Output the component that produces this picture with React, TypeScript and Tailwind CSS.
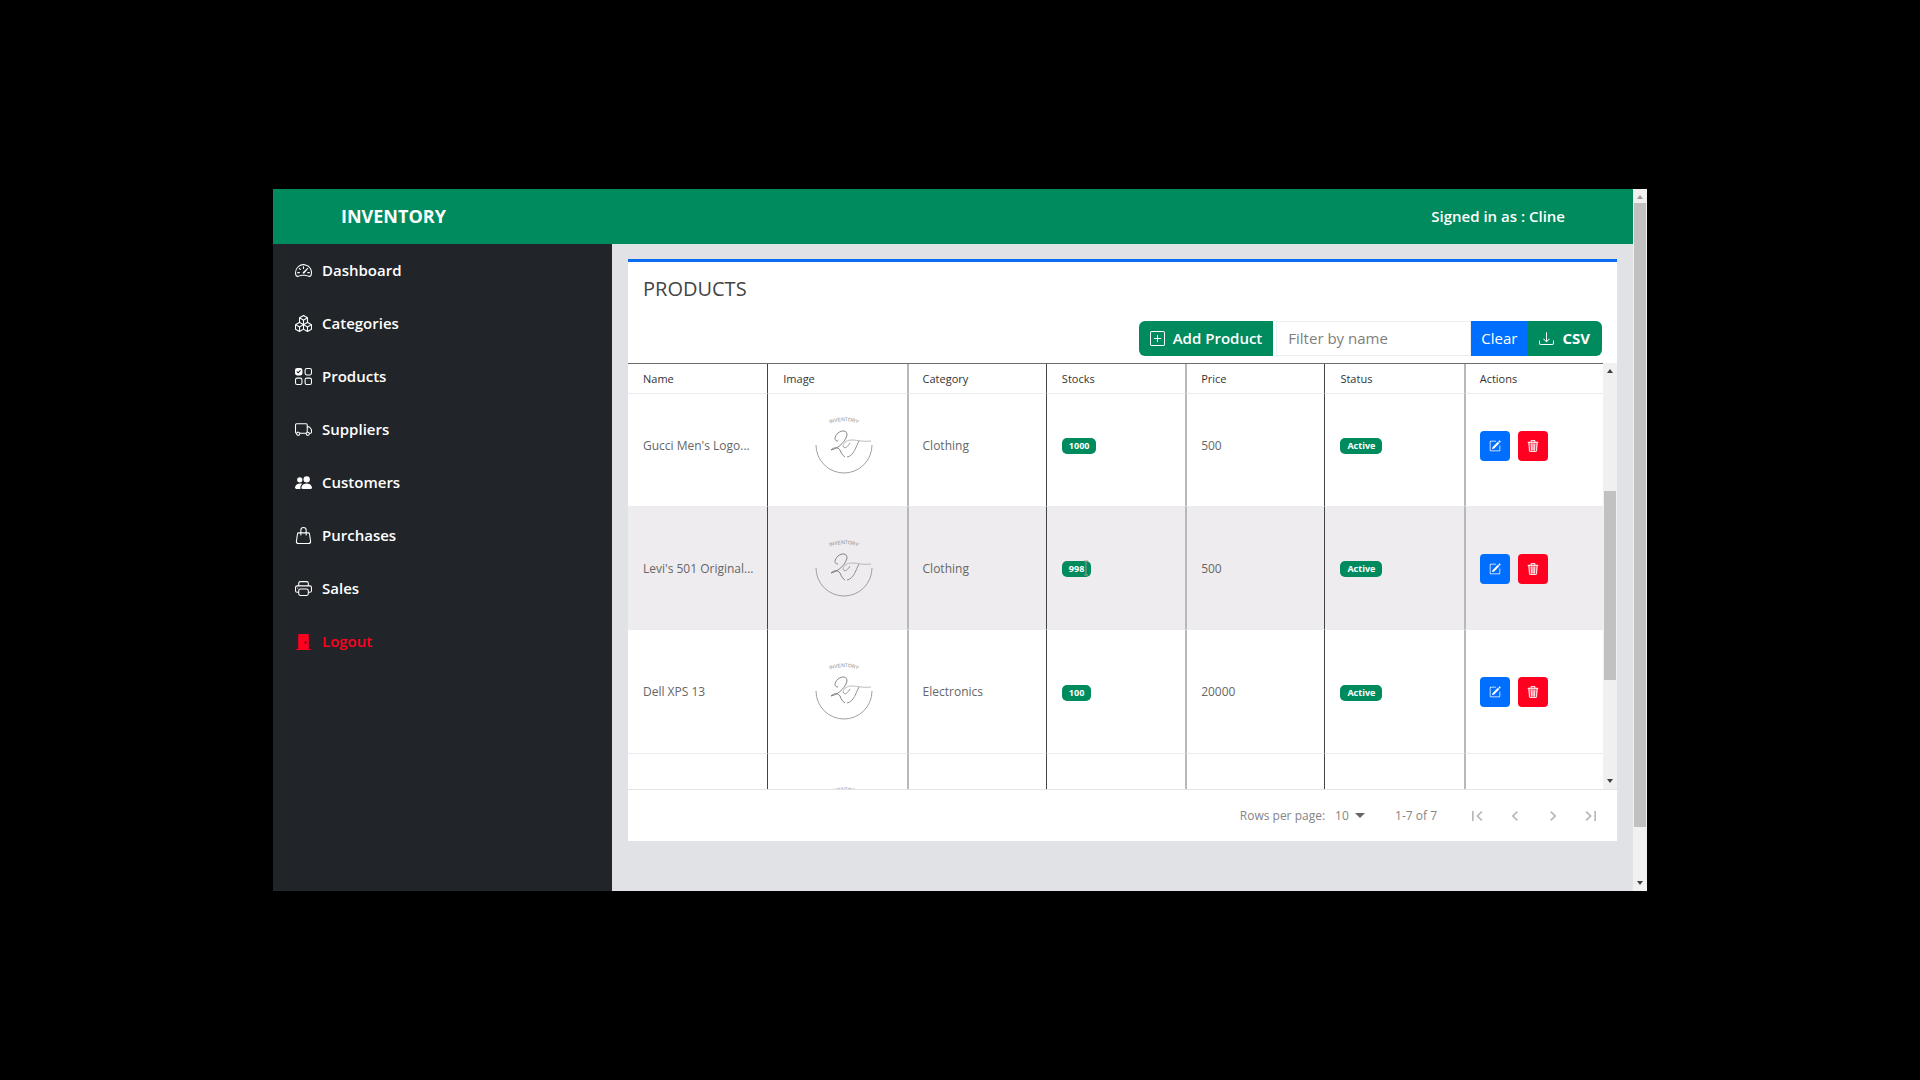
import type { ReactNode } from 'react';
import type { IconType } from 'react-icons';
import {
  BsSpeedometer2,
  BsBoxes,
  BsUiChecksGrid,
  BsTruck,
  BsPeopleFill,
  BsHandbag,
  BsPrinter,
  BsDoorClosedFill,
  BsPlusSquare,
  BsDownload,
  BsPencilSquare,
  BsTrash3,
} from 'react-icons/bs';
import { MdFirstPage, MdChevronLeft, MdChevronRight, MdLastPage } from 'react-icons/md';

type NavItem = { label: string; icon: IconType; danger?: boolean };
type Product = { name: string; category: string; stock: number; price: number };

const navItems: NavItem[] = [
  { label: 'Dashboard', icon: BsSpeedometer2 },
  { label: 'Categories', icon: BsBoxes },
  { label: 'Products', icon: BsUiChecksGrid },
  { label: 'Suppliers', icon: BsTruck },
  { label: 'Customers', icon: BsPeopleFill },
  { label: 'Purchases', icon: BsHandbag },
  { label: 'Sales', icon: BsPrinter },
  { label: 'Logout', icon: BsDoorClosedFill, danger: true },
];

const columns = ['Name', 'Image', 'Category', 'Stocks', 'Price', 'Status', 'Actions'];

const products: Product[] = [
  { name: "Gucci Men's Logo...", category: 'Clothing', stock: 1000, price: 500 },
  { name: "Levi's 501 Original...", category: 'Clothing', stock: 998, price: 500 },
  { name: 'Dell XPS 13', category: 'Electronics', stock: 100, price: 20000 },
];

const rowHeights = ['h-[113px] pb-[10px]', 'h-[123px]', 'h-[124px]'];

function columnBorder(index: number) {
  if (index === 0) return 'pl-[15px]';
  return index % 2 === 1
    ? 'border-l border-l-[#444444] pl-[15px]'
    : 'border-l-2 border-l-[#b8b8b8] pl-[14px]';
}

function Logo() {
  return (
    <svg viewBox="-1 -1 120 96" className="block h-24 w-[120px] max-w-none" fill="none" aria-label="Inventory logo">
      <defs>
        <path id="logo-arc" d="M42 26 Q60 18 78 26" />
      </defs>
      <text fontSize="5" fill="#888" fontFamily="Liberation Sans, sans-serif" textAnchor="middle">
        <textPath href="#logo-arc" startOffset="50%">INVENTORY</textPath>
      </text>
      <path d="M32 46 A28 28 0 0 0 88 46" stroke="#a0a0a0" strokeWidth="1" />
      <path
        d="M54 42 C50 42 50 38 54 34 C58 31 63 31 63 36 C62 41 56 49 47 51 C50 48 54 48 56 51 C57 54 59 57 61 58"
        stroke="#777"
        strokeWidth="0.9"
      />
      <path d="M59 47 C60 43 63 41 68 41 C74 41 78 43 87 42" stroke="#aaa" strokeWidth="0.8" />
      <path d="M75 42 C72 47 70 57 63 58 M59 47 C61 51 64 47 66 44" stroke="#888" strokeWidth="0.9" />
    </svg>
  );
}

function Badge({ children }: { children: ReactNode }) {
  return (
    <span className="inline-block rounded-[5px] bg-[#008b5e] px-[7px] text-[9px] leading-4 font-bold text-white">
      {children}
    </span>
  );
}

function Row({ product, striped, height }: { product?: Product; striped?: boolean; height: string }) {
  const cells: ReactNode[] = [
    product?.name,
    <Logo />,
    product?.category,
    product && (
      <span className="relative inline-block">
        <Badge>{product.stock}</Badge>
        {striped && (
          <svg viewBox="0 0 6 16" className="absolute top-0 right-[2px] h-4 w-[6px]" stroke="#9a9a8a" fill="none">
            <path d="M1 1h4M3 1v14M1 15h4" />
          </svg>
        )}
      </span>
    ),
    product?.price,
    product && <Badge>Active</Badge>,
    product && (
      <div className="flex gap-2">
        <button
          aria-label={`Edit ${product.name}`}
          className="flex h-[30px] w-[30px] items-center justify-center rounded bg-[#006fff] text-white"
        >
          <BsPencilSquare size={12} />
        </button>
        <button
          aria-label={`Delete ${product.name}`}
          className="flex h-[30px] w-[30px] items-center justify-center rounded bg-[#ff0020] text-white"
        >
          <BsTrash3 size={12} strokeWidth={0.5} />
        </button>
      </div>
    ),
  ];
  return (
    <tr className={striped ? 'bg-[#eeecee]' : 'bg-white'}>
      {cells.map((cell, i) => (
        <td
          key={columns[i]}
          className={`border-b border-b-[#ececee] pt-[2px] whitespace-nowrap ${height} ${columnBorder(i)}`}
        >
          {cell}
        </td>
      ))}
    </tr>
  );
}

function Arrow({ up, light }: { up?: boolean; light?: boolean }) {
  return (
    <svg viewBox="0 0 6 4" className="h-1 w-[6px]" fill={light ? '#9a9a9a' : '#404040'}>
      <path d={up ? 'M0 4L3 0L6 4Z' : 'M0 0L3 4L6 0Z'} />
    </svg>
  );
}

export default function App() {
  return (
    <div className="flex min-h-screen flex-col justify-center bg-black px-[273px] pb-px font-['Open_Sans','Noto_Sans',sans-serif]">
      <div className="flex">
        <div className="flex min-w-0 flex-1 flex-col">
          <header className="flex h-[55px] items-center justify-between bg-[#008b5e] px-[68px] text-white">
            <h1 className="text-lg font-bold">INVENTORY</h1>
            <p className="text-[15px] font-semibold">Signed in as : Cline</p>
          </header>
          <div className="flex">
            <nav className="w-[339px] shrink-0 bg-[#212428]">
              {navItems.map(({ label, icon: Icon, danger }) => (
                <a
                  key={label}
                  href="#"
                  className={`flex h-[53px] items-center gap-[10px] pl-[22px] text-[15px] font-semibold ${danger ? 'text-[#ff0020]' : 'text-white'}`}
                >
                  <Icon size={17} />
                  {label}
                </a>
              ))}
            </nav>
            <main className="min-w-0 flex-1 bg-[#e1e2e6] px-4 pt-[15px] pb-[50px]">
              <section className="border-t-[3px] border-[#0a6cf0] bg-white">
                <h2 className="px-[15px] pt-[13px] text-xl leading-7 text-[#444]">PRODUCTS</h2>
                <div className="mt-[18px] mr-[15px] flex h-[35px] justify-end text-[15px]">
                  <button className="flex items-center gap-2 rounded-l-md bg-[#008b5e] px-[11px] font-semibold text-white">
                    <BsPlusSquare size={15} />
                    Add Product
                  </button>
                  <input
                    aria-label="Filter by name"
                    placeholder="Filter by name"
                    className="ml-[3px] w-[195px] border border-[#ededed] px-[11px] placeholder:text-[#808080]"
                  />
                  <button className="bg-[#006fff] px-[10px] text-white">Clear</button>
                  <button className="flex items-center gap-2 rounded-r-md bg-[#008b5e] px-3 font-bold text-white">
                    <BsDownload size={15} />
                    CSV
                  </button>
                </div>
                <div className="mt-[7px] flex h-[426px] overflow-hidden">
                  <div className="min-w-0 flex-1 border-t border-[#6b6b6b]">
                    <table className="w-full table-fixed border-separate border-spacing-0 text-left text-xs text-[#666]">
                      <thead>
                        <tr>
                          {columns.map((column, i) => (
                            <th
                              key={column}
                              className={`h-[30px] border-b border-b-[#ececee] pt-[2px] text-[11px] font-medium text-[#333] ${columnBorder(i)}`}
                            >
                              {column}
                            </th>
                          ))}
                        </tr>
                      </thead>
                      <tbody>
                        {products.map((product, i) => (
                          <Row key={product.name} product={product} striped={i === 1} height={rowHeights[i]} />
                        ))}
                        <Row height="h-[124px]" />
                      </tbody>
                    </table>
                  </div>
                  <div className="flex w-[14px] flex-col items-center bg-[#f1f0f1] py-[6px]">
                    <Arrow up />
                    <div className="mt-[118px] h-[189px] w-3 bg-[#c1c1c1]" />
                    <div className="mt-auto">
                      <Arrow />
                    </div>
                  </div>
                </div>
                <footer className="flex h-[52px] items-center justify-end border-t border-[#e4e4e4] pt-px pr-4 text-xs text-[#858585]">
                  <label htmlFor="rows">Rows per page:</label>
                  <div className="relative ml-[10px] flex items-center">
                    <select id="rows" className="w-[30px] appearance-none bg-transparent">
                      <option>10</option>
                    </select>
                    <svg viewBox="0 0 10 5" className="pointer-events-none absolute right-0 h-[5px] w-[10px]" fill="#666">
                      <path d="M0 0h10L5 5Z" />
                    </svg>
                  </div>
                  <span className="ml-[30px]">1-7 of 7</span>
                  <div className="ml-[30px] flex gap-[18px] text-[#b8b8b8]">
                    <button aria-label="First page"><MdFirstPage size={20} /></button>
                    <button aria-label="Previous page"><MdChevronLeft size={20} /></button>
                    <button aria-label="Next page"><MdChevronRight size={20} /></button>
                    <button aria-label="Last page"><MdLastPage size={20} /></button>
                  </div>
                </footer>
              </section>
            </main>
          </div>
        </div>
        <div className="flex w-[14px] flex-col items-center bg-[#f1f1f1] py-[6px]">
          <Arrow up light />
          <div className="mt-1 h-[624px] w-3 bg-[#c1c1c1]" />
          <div className="mt-auto">
            <Arrow />
          </div>
        </div>
      </div>
    </div>
  );
}
